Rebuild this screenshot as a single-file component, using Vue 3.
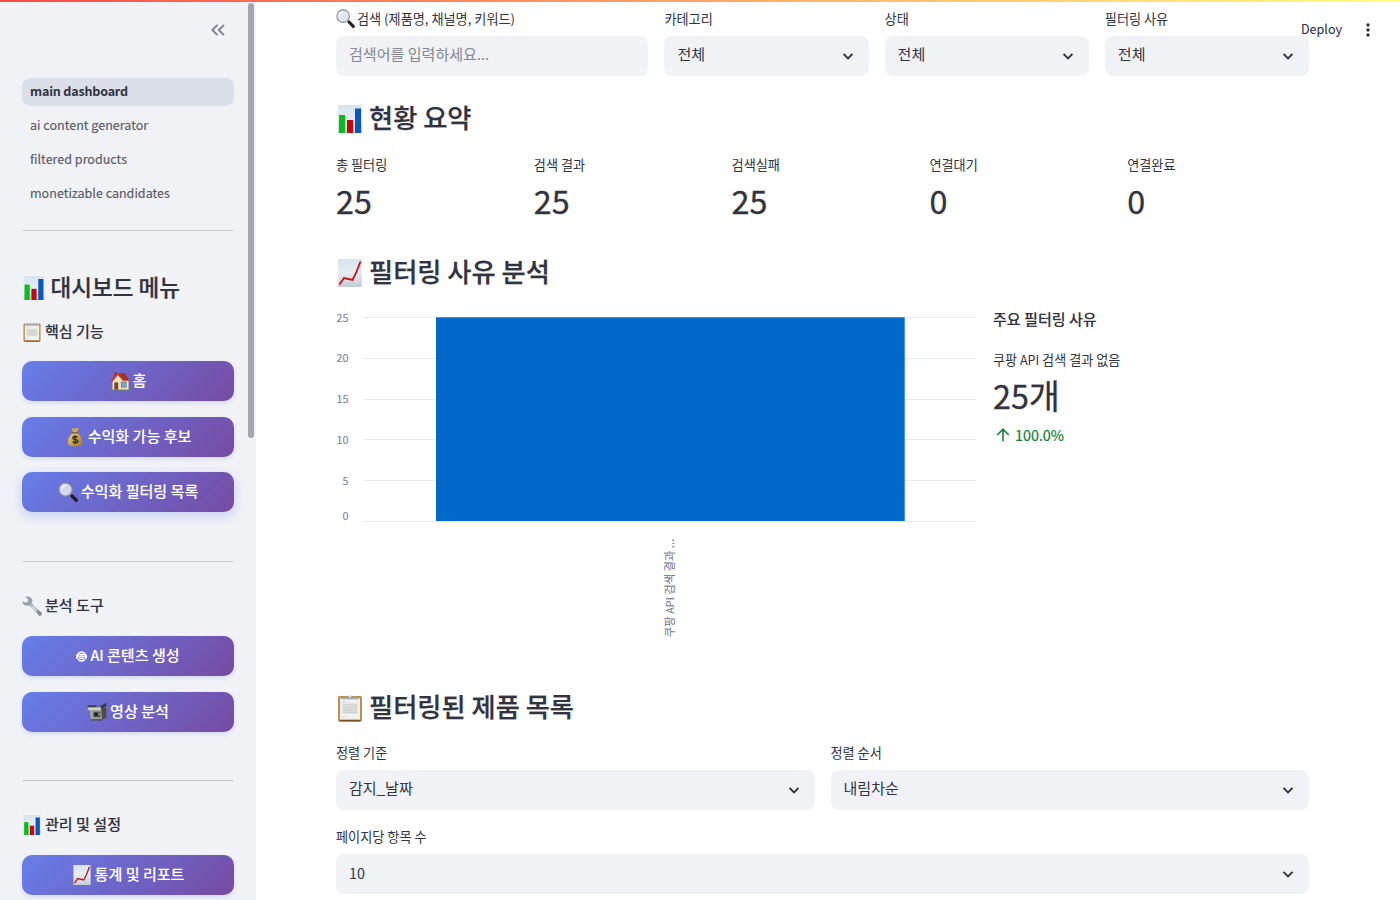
<script setup>
const nav = ['main dashboard', 'ai content generator', 'filtered products', 'monetizable candidates']
const groups = [
  { id: 'core', title: '핵심 기능', icon: 'clip', items: [
    { icon: 'house', text: '홈' },
    { icon: 'money', text: '수익화 가능 후보' },
    { icon: 'lens', text: '수익화 필터링 목록', hover: true },
  ] },
  { id: 'tools', title: '분석 도구', icon: 'wrench', items: [
    { icon: 'robot', latin: 'AI', text: '콘텐츠 생성' },
    { icon: 'camera', text: '영상 분석' },
  ] },
  { id: 'admin', title: '관리 및 설정', icon: 'bars', items: [{ icon: 'trend', text: '통계 및 리포트' }] },
]
const filters = [
  { label: '카테고리', value: '전체' },
  { label: '상태', value: '전체' },
  { label: '필터링 사유', value: '전체' },
]
const metrics = [
  { label: '총 필터링', value: 25 },
  { label: '검색 결과', value: 25 },
  { label: '검색실패', value: 25 },
  { label: '연결대기', value: 0 },
  { label: '연결완료', value: 0 },
]
const sorts = [
  { label: '정렬 기준', value: '감지_날짜' },
  { label: '정렬 순서', value: '내림차순' },
]
const ticks = [
  { v: 25, y: 7.5, t: 12 },
  { v: 20, y: 48.5, t: 52 },
  { v: 15, y: 89.5, t: 93 },
  { v: 10, y: 129.5, t: 134 },
  { v: 5, y: 170.5, t: 175 },
  { v: 0, y: 211.5, t: 210 },
]
</script>

<template>
  <svg class="sprite" aria-hidden="true">
    <defs>
      <linearGradient id="paper" x1="0" y1="0" x2="0" y2="1">
        <stop offset="0" stop-color="#d7e3ec" /><stop offset=".5" stop-color="#e6edf2" /><stop offset="1" stop-color="#c3ccd3" />
      </linearGradient>
      <linearGradient id="gold" x1="0" y1="0" x2="1" y2="1">
        <stop offset="0" stop-color="#efd27a" /><stop offset="1" stop-color="#a87616" />
      </linearGradient>
      <linearGradient id="steel" x1="0" y1="0" x2="1" y2="1">
        <stop offset="0" stop-color="#8d989f" /><stop offset=".5" stop-color="#c9cdd0" /><stop offset="1" stop-color="#77797c" />
      </linearGradient>
    </defs>
    <symbol id="bars" viewBox="0 0 28 28">
      <rect x="2" y="0" width="24" height="28" fill="url(#paper)" />
      <rect x="3" y="10" width="6" height="18" fill="#0bbd1c" />
      <rect x="11" y="15" width="6" height="13" fill="#c40711" />
      <rect x="19" y="3.5" width="6" height="24.5" fill="#0a57bd" />
    </symbol>
    <symbol id="trend" viewBox="0 0 28 28">
      <rect x="2" y="0" width="24" height="28" fill="url(#paper)" />
      <path d="M3.500 25.500 8 19l8.500 2L20 14l4.500-11.500" fill="none" stroke="#c8101a" stroke-width="1.800" />
    </symbol>
    <symbol id="clip" viewBox="0 0 28 28">
      <rect x="2" y="2" width="24" height="25.500" rx="1.500" fill="#bd8f4e" />
      <rect x="3.500" y="26" width="21" height="1.500" fill="#79501e" />
      <rect x="4" y="4" width="20" height="21.500" fill="#f0f0ee" />
      <rect x="6.500" y="9.500" width="15" height="10" fill="#dcdcda" />
      <path d="M6 8h4M7 11h14M7 13.500h14M7 16h14M7 18.500h14M6 23h3" stroke="#cfcfcd" stroke-width="1" />
      <path d="M5 5.200V3.200h6.500C12 .5 16 .5 16.500 3.200H23v2z" fill="#9eabb4" />
      <circle cx="14" cy="2" r="1.200" fill="#dce5ea" />
    </symbol>
    <symbol id="lens" viewBox="0 0 28 28">
      <path d="m17 17 3 3" stroke="#8a8e93" stroke-width="3" />
      <path d="m19.500 19.500 6 6" stroke="#202022" stroke-width="4.600" stroke-linecap="round" />
      <circle cx="10.500" cy="10.500" r="9.200" fill="#dfe4ee" fill-opacity=".9" stroke="#8a8e92" stroke-width="1.600" />
      <path d="M5 10a6 6 0 0 1 6-5" fill="none" stroke="#fff" stroke-width="1.500" />
    </symbol>
    <symbol id="house" viewBox="0 0 28 28">
      <path d="M1 27c0-3 3-3.500 5-3h17c3-.5 4.500.5 4.500 3z" fill="#4f9a2b" />
      <path d="M6 2h4v6H6z" fill="#8d3f2c" />
      <path d="M3.500 14 11 5h11l4 8v13H3.500z" fill="#f4e3b8" />
      <path d="m9.500 3.500 12-.5 5.500 10.500h-8.500z" fill="#a93226" />
      <path d="M10.500 4 2 14.500" stroke="#c33a2d" stroke-width="2.500" />
      <path d="M10.500 4 19 14" stroke="#d14a3a" stroke-width="1.500" />
      <rect x="6" y="16" width="5.500" height="10" fill="#7b4627" />
      <rect x="16" y="15.500" width="6.500" height="7" fill="#69b6e6" stroke="#6f5b3e" stroke-width="1" />
    </symbol>
    <symbol id="money" viewBox="0 0 28 28">
      <path d="M9 1.500c2 1.500 3-.5 5 .5s3-1.500 5-.5l-2.500 6.500h-5z" fill="#d9a83a" />
      <path d="M11 8.500C7 11 4 16 4 20.500c0 5 3 6.500 10 6.500s10-1.500 10-6.500C24 16 21 11 17 8.500z" fill="url(#gold)" />
      <path d="M10.500 8.200h7" stroke="#8b5d12" stroke-width="1.800" stroke-linecap="round" />
      <path d="M17.500 14.500c-1-1.700-6.500-1.700-6.500.8 0 3 7 1.300 7 4.500 0 2.700-6 2.700-7.300.6M14.200 11.500v12.700" fill="none" stroke="#33302a" stroke-width="2" />
    </symbol>
    <symbol id="wrench" viewBox="0 0 28 28">
      <path d="m10 10 15 14.500" stroke="url(#steel)" stroke-width="4.600" stroke-linecap="round" />
      <path d="M4 1.500 8 4l.5 3.500-3 2L1 7.500C-.5 11 4 15 9.500 13.500l5-5C15.500 3 10-1 4 1.500z" fill="#98a4ac" />
      <path d="m12 12 9 9.500" stroke="#e0e0df" stroke-width="1.300" />
      <circle cx="25" cy="25" r="2.600" fill="#777a7c" /><circle cx="25" cy="25" r=".9" fill="#eee" />
    </symbol>
    <symbol id="robot" viewBox="0 0 11 11">
      <ellipse cx="5.500" cy="5.500" rx="4.300" ry="4.500" fill="none" stroke="#fff" stroke-width="1.300" />
      <path d="M2.200 2.800h6.600v3.600H2.200zM0 3.800h1.300v3.400H0zM9.700 3.800H11v3.400H9.700z" fill="#fff" />
      <path d="M3.200 4.700h1.500M6.300 4.700h1.500" stroke="#6e68ce" stroke-width=".9" />
      <path d="M3 7.700h5" stroke="#fff" stroke-width="1.200" />
    </symbol>
    <symbol id="camera" viewBox="0 0 28 28">
      <path d="M18 6 27 1v5l-7 4z" fill="#35363a" />
      <path d="M1 4.500h12l1 3H1z" fill="#3d3e40" />
      <path d="M1 7.500h19l2 17.500H5L4 12H1z" fill="#a1a39d" />
      <path d="M2 8h17v3H2z" fill="#d5d5ca" />
      <path d="M20 8.500h7V22l-6 3z" fill="#4c4b48" />
      <rect x="9" y="13.500" width="10" height="8" fill="#5d5e5c" />
      <circle cx="12.500" cy="17.500" r="2.800" fill="#222427" /><circle cx="17" cy="17" r="1" fill="#bbb" />
      <path d="M5 25h16" stroke="#383838" stroke-width="1.500" />
    </symbol>
  </svg>

  <div class="app">
    <aside class="side">
      <div class="collapse">
        <svg width="14" height="12" viewBox="0 0 14 12"><path d="M6.500.800 1.300 6l5.200 5.200M13 .8 7.800 6l5.200 5.200" /></svg>
      </div>
      <nav>
        <a v-for="(n, i) in nav" :key="n" :class="{ on: i === 0 }">{{ n }}</a>
      </nav>
      <hr />
      <h2 class="menu"><svg><use href="#bars" /></svg><span>대시보드 메뉴</span></h2>
      <section v-for="g in groups" :key="g.id" :class="g.id">
        <h3><svg><use :href="'#' + g.icon" /></svg><span>{{ g.title }}</span></h3>
        <button v-for="b in g.items" :key="b.text" :class="{ lift: b.hover }">
          <svg :class="b.icon"><use :href="'#' + b.icon" /></svg>
          <span><span v-if="b.latin" class="lat">{{ b.latin }}&nbsp;</span>{{ b.text }}</span>
        </button>
      </section>
      <div class="thumb"></div>
    </aside>

    <main>
      <div class="filters">
        <div class="field">
          <label class="search"><svg><use href="#lens" /></svg><span>검색 (제품명, 채널명, 키워드)</span></label>
          <div class="box hint"><span>검색어를 입력하세요<span class="lat">...</span></span></div>
        </div>
        <div v-for="f in filters" :key="f.label" class="field">
          <label>{{ f.label }}</label>
          <div class="box"><span>{{ f.value }}</span><svg class="chev" viewBox="0 0 10 7"><path d="m.6 1 4.400 4.400L9.400 1" /></svg></div>
        </div>
      </div>

      <h2 class="h-sum"><svg><use href="#bars" /></svg><span>현황 요약</span></h2>
      <div class="metrics">
        <div v-for="m in metrics" :key="m.label">
          <div class="mlabel">{{ m.label }}</div>
          <div class="mval">{{ m.value }}</div>
        </div>
      </div>

      <h2 class="h-reason"><svg><use href="#trend" /></svg><span>필터링 사유 분석</span></h2>
      <div class="analysis">
        <svg class="chart" viewBox="0 0 641 340">
          <g v-for="t in ticks" :key="t.v">
            <line x1="28" x2="640" :y1="t.y" :y2="t.y" />
            <text x="12.500" :y="t.t" text-anchor="end">{{ t.v }}</text>
          </g>
          <rect x="100" y="7.300" width="468.700" height="203.700" />
          <text class="cat" transform="translate(338 327) rotate(-90)">쿠팡 <tspan class="cl">API</tspan> 검색 결과 <tspan class="dots">…</tspan></text>
        </svg>
        <div class="reason">
          <strong>주요 필터링 사유</strong>
          <div class="rlabel">쿠팡 <span class="lat">API</span> 검색 결과 없음</div>
          <div class="rval"><span class="lat">25</span>개</div>
          <div class="delta">
            <svg width="14" height="14" viewBox="0 0 14 14"><path d="M7 13.300V1.300M1.200 7 7 1.200 12.800 7" /></svg>
            <span>100.0%</span>
          </div>
        </div>
      </div>

      <h2 class="h-list"><svg><use href="#clip" /></svg><span>필터링된 제품 목록</span></h2>
      <div class="sorts">
        <div v-for="s in sorts" :key="s.label" class="field">
          <label>{{ s.label }}</label>
          <div class="box"><span>{{ s.value }}</span><svg class="chev" viewBox="0 0 10 7"><path d="m.6 1 4.400 4.400L9.400 1" /></svg></div>
        </div>
      </div>
      <div class="field pages">
        <label>페이지당 항목 수</label>
        <div class="box"><span class="num">10</span><svg class="chev" viewBox="0 0 10 7"><path d="m.6 1 4.400 4.400L9.400 1" /></svg></div>
      </div>
    </main>

    <div class="topline"></div>
    <div class="toolbar">
      <span>Deploy</span>
      <svg width="4" height="14" viewBox="0 0 4 14"><circle cx="2" cy="2" r="1.700" /><circle cx="2" cy="7" r="1.700" /><circle cx="2" cy="12" r="1.700" /></svg>
    </div>
  </div>
</template>

<style>
html, body { height: 100%; overflow: hidden; background: #fff; }
</style>
<style scoped>
.sprite { position: absolute; width: 0; height: 0; }
.app { position: relative; display: flex; width: 1400px; height: 900px; overflow: hidden; font-family: "Noto Sans CJK KR", "Noto Sans", sans-serif; color: #31333f; }
.app * { box-sizing: border-box; }
h2, h3 { margin: 0; display: flex; align-items: center; white-space: nowrap; font-weight: 500; -webkit-text-stroke: .25px #31333f; }
h2 span { padding-bottom: 4px; }
h3 span { padding-bottom: 3px; }
button > span { padding-bottom: 2px; }
.tools button > span, .admin button > span { padding-bottom: 3px; }
.lat { font-size: .954em; }

.side { position: relative; width: 256px; height: 900px; flex: none; background: #f0f2f6; padding: 0 22px; overflow: hidden; }
.collapse { height: 78px; display: flex; justify-content: flex-end; padding: 24px 9px 0 0; }
.collapse path { fill: none; stroke: #7f828c; stroke-width: 1.9; }
nav { display: flex; flex-direction: column; gap: 6px; }
nav a { height: 28px; line-height: 26px; padding-left: 8px; border-radius: 8px; font-size: 12.56px; color: #555763; -webkit-text-stroke: .1px #555763; }
nav a.on { background: #dadfe9; font-weight: 700; color: #31333f; letter-spacing: -.015em; -webkit-text-stroke: 0; }
hr { margin: 22px 0 0; border: 0; border-top: 1px solid #caccd2; }
.menu { height: 36px; margin-top: 39px; font-size: 22.55px; gap: 4.5px; }
.menu svg { width: 24px; height: 24px; }
h3 { height: 24px; font-size: 15.05px; gap: 3px; -webkit-text-stroke-width: .1px; }
h3 svg { width: 20px; height: 20px; }
section { display: flex; flex-direction: column; }
.core { padding-top: 14px; height: 255px; }
.tools, .admin { border-top: 1px solid #caccd2; }
.tools { padding-top: 32px; height: 219px; }
.admin { padding-top: 32px; }
button { display: flex; align-items: center; justify-content: center; gap: 3px; height: 40px; flex: none; margin: 0 0 16px; padding: 0; border: 0; border-radius: 10px; background: linear-gradient(135deg, #667eea, #764ba2); box-shadow: 0 2px 4px rgba(102, 126, 234, .2); color: #fff; font-family: inherit; font-size: 15.05px; font-weight: 500; line-height: 24px; -webkit-text-stroke: .1px #fff; }
button.lift { margin-top: -1px; box-shadow: 0 4px 12px rgba(102, 126, 234, .3); }
h3 + button { margin-top: 17px; }
.tools h3 + button, .admin h3 + button { margin-top: 18px; }
button svg { width: 20px; height: 20px; }
button svg.robot { width: 11px; height: 11px; }
.thumb { position: absolute; left: 248px; top: 3px; width: 6px; height: 435px; border-radius: 3px; background: #a4a5ae; }

main { width: 1053px; padding: 9px 0 0 80px; }
.filters { display: grid; grid-template-columns: 312.4px 1fr 1fr 1fr; gap: 16px; }
.sorts { display: grid; grid-template-columns: 1fr 1fr; gap: 16px; }
label { display: flex; align-items: center; height: 20px; margin-bottom: 7px; padding-bottom: 2px; font-size: 13.15px; white-space: nowrap; gap: 2px; }
.search svg { width: 19px; height: 19px; }
.box { display: flex; justify-content: space-between; align-items: center; height: 40px; padding: 0 16px 2px 13px; border-radius: 8px; background: #f0f2f6; font-size: 15.05px; }
.box > span { padding-bottom: 3px; }
.hint { color: #858791; }
.box > .num { font-size: 14.35px; padding-bottom: 1px; }
.chev { width: 10px; height: 7px; margin-top: 2px; }
.chev path { fill: none; stroke: #31333f; stroke-width: 1.8; }
main h2 { height: 40px; font-size: 26.25px; gap: 5px; }
main h2 svg { width: 28px; height: 28px; }
.h-sum { margin-top: 23px; }
.metrics { display: grid; grid-template-columns: repeat(5, 1fr); gap: 16px; margin-top: 16px; }
.mlabel { height: 19px; line-height: 20px; font-size: 13.15px; }
.mval { height: 55px; line-height: 52px; font-size: 32.3px; -webkit-text-stroke: .3px #31333f; }
.h-reason { margin-top: 24px; }
.analysis { display: grid; grid-template-columns: 641px 1fr; gap: 16px; margin-top: 17px; height: 340px; }
.chart { width: 641px; height: 340px; }
.chart line { stroke: #e6eaf1; stroke-width: 1; }
.chart rect { fill: #0068c9; }
.chart text { font-size: 10.8px; fill: #808495; stroke: #808495; stroke-width: .15px; }
.chart .cat { font-size: 11.28px; }
.chart .cl { font-size: 10.8px; }
.chart .dots { font-family: "Noto Sans", sans-serif; font-size: 12px; }
.reason strong { display: block; height: 20px; line-height: 17px; font-size: 15.05px; font-weight: 500; -webkit-text-stroke: .1px #31333f; }
.rlabel { height: 20px; line-height: 20px; margin-top: 20px; font-size: 13.1px; }
.rval { height: 54px; line-height: 49px; font-size: 33.85px; -webkit-text-stroke: .3px #31333f; }
.delta { display: flex; align-items: center; gap: 5px; height: 22px; padding-left: 3px; color: #158237; font-size: 14.35px; -webkit-text-stroke: .2px #158237; }
.delta span { padding-bottom: 1px; }
.delta path { fill: none; stroke: #158237; stroke-width: 1.6; }
.h-list { margin-top: 38px; }
.sorts { margin-top: 15px; }
.pages { margin-top: 17px; }

.topline { position: absolute; left: 0; top: 0; width: 1400px; height: 2px; background: linear-gradient(90deg, #ff4b4b, #ffff80); }
.toolbar { position: absolute; right: 30px; top: 18px; height: 24px; display: flex; align-items: center; gap: 24px; font-size: 12.56px; -webkit-text-stroke: .1px #31333f; }
.toolbar span { padding-bottom: 4px; }
.toolbar circle { fill: #31333f; }
</style>
